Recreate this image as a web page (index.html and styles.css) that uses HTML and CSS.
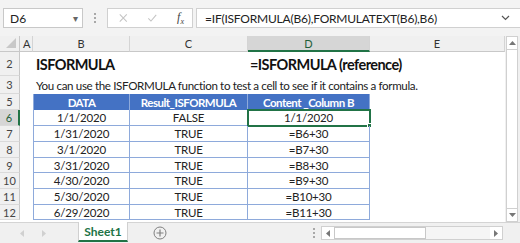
FILE: index.html
```html
<!DOCTYPE html>
<html>
<head>
<meta charset="utf-8">
<link rel="stylesheet" href="styles.css">
</head>
<body>
<div class="app">
  <div class="topbar">
    <div class="namebox"><span class="nb-text">D6</span><span class="nb-arrow">▾</span></div>
    <div class="vdots"><i></i><i></i><i></i></div>
    <div class="fxbox">
      <svg class="ic" width="12" height="12" viewBox="0 0 12 12"><path d="M2 2L10 10M10 2L2 10" stroke="#c4c4c4" stroke-width="1.2" fill="none"/></svg>
      <svg class="ic" width="12" height="12" viewBox="0 0 12 12"><path d="M1.5 6.5L4.5 9.5L10.5 2.5" stroke="#c4c4c4" stroke-width="1.2" fill="none"/></svg>
      <span class="fx">f<sub>x</sub></span>
    </div>
    <div class="formula"><span>=IF(ISFORMULA(B6),FORMULATEXT(B6),B6)</span><span class="chev">
      <svg width="9" height="6" viewBox="0 0 9 6"><path d="M1 1L4.5 4.5L8 1" stroke="#555" stroke-width="1.2" fill="none"/></svg></span></div>
  </div>
  <div class="main">
    <div class="sheet">
      <div class="row hdr">
        <div class="rh corner"><svg width="12" height="12" viewBox="0 0 12 12"><path d="M11 1L11 11L1 11Z" fill="#c8c8c8"/></svg></div>
        <div class="c ca">A</div><div class="c cb">B</div><div class="c cc">C</div><div class="c cd sel">D</div><div class="c ce">E</div>
      </div>
      <div class="row r2">
        <div class="rh">2</div><div class="c ca"></div>
        <div class="c cb title">ISFORMULA</div><div class="c cc"></div>
        <div class="c cd title wide">=ISFORMULA (reference)</div><div class="c ce"></div>
      </div>
      <div class="row r3">
        <div class="rh">3</div><div class="c ca"></div>
        <div class="c cb desc">You can use the ISFORMULA function to test a cell to see if it contains a formula.</div>
      </div>
      <div class="row r5">
        <div class="rh">5</div><div class="c ca"></div>
        <div class="c cb th">DATA</div><div class="c cc th">Result_ISFORMULA</div><div class="c cd th">Content _Column B</div><div class="c ce"></div>
      </div>
      <div class="row h16">
        <div class="rh rsel">6</div><div class="c ca"></div>
        <div class="c cb td">1/1/2020</div><div class="c cc td">FALSE</div><div class="c cd td active">1/1/2020<span class="handle"></span></div><div class="c ce"></div>
      </div>
      <div class="row h16">
        <div class="rh">7</div><div class="c ca"></div>
        <div class="c cb td">1/31/2020</div><div class="c cc td">TRUE</div><div class="c cd td">=B6+30</div><div class="c ce"></div>
      </div>
      <div class="row h16">
        <div class="rh">8</div><div class="c ca"></div>
        <div class="c cb td">3/1/2020</div><div class="c cc td">TRUE</div><div class="c cd td">=B7+30</div><div class="c ce"></div>
      </div>
      <div class="row h15">
        <div class="rh">9</div><div class="c ca"></div>
        <div class="c cb td">3/31/2020</div><div class="c cc td">TRUE</div><div class="c cd td">=B8+30</div><div class="c ce"></div>
      </div>
      <div class="row h16">
        <div class="rh">10</div><div class="c ca"></div>
        <div class="c cb td">4/30/2020</div><div class="c cc td">TRUE</div><div class="c cd td">=B9+30</div><div class="c ce"></div>
      </div>
      <div class="row h16">
        <div class="rh">11</div><div class="c ca"></div>
        <div class="c cb td">5/30/2020</div><div class="c cc td">TRUE</div><div class="c cd td">=B10+30</div><div class="c ce"></div>
      </div>
      <div class="row h15">
        <div class="rh">12</div><div class="c ca"></div>
        <div class="c cb td">6/29/2020</div><div class="c cc td">TRUE</div><div class="c cd td">=B11+30</div><div class="c ce"></div>
      </div>
    </div>
    <div class="vscroll">
      <div class="sbtn"><svg width="7" height="4" viewBox="0 0 7 4"><path d="M0 4L3.5 0L7 4Z" fill="#777"/></svg></div>
      <div class="strack"></div>
      <div class="sbtn"><svg width="7" height="4" viewBox="0 0 7 4"><path d="M0 0L3.5 4L7 0Z" fill="#777"/></svg></div>
    </div>
  </div>
  <div class="tabbar">
    <div class="navs">
      <svg width="4" height="7" viewBox="0 0 4 7"><path d="M4 0L0 3.5L4 7Z" fill="#d0d0d0"/></svg>
      <svg width="4" height="7" viewBox="0 0 4 7"><path d="M0 0L4 3.5L0 7Z" fill="#d0d0d0"/></svg>
    </div>
    <div class="tab">Sheet1</div>
    <div class="plus"><svg width="14" height="14" viewBox="0 0 14 14"><circle cx="7" cy="7" r="6" stroke="#808080" stroke-width="1" fill="none"/><path d="M7 3.5V10.5M3.5 7H10.5" stroke="#808080" stroke-width="1.2"/></svg></div>
    <div class="spacer"></div>
    <div class="vdots small"><i></i><i></i><i></i></div>
    <div class="hscroll">
      <div class="hbtn"><svg width="4" height="7" viewBox="0 0 4 7"><path d="M4 0L0 3.5L4 7Z" fill="#777"/></svg></div>
      <div class="thumb"></div>
      <div class="htrack"></div>
      <div class="hbtn"><svg width="4" height="7" viewBox="0 0 4 7"><path d="M0 0L4 3.5L0 7Z" fill="#777"/></svg></div>
    </div>
  </div>
</div>
</body>
</html>
```

FILE: styles.css
```css
* { box-sizing: border-box; }
html, body { margin: 0; padding: 0; }
body { width: 520px; height: 243px; overflow: hidden; background: #f0f0f0; font-family: "Lato", "Open Sans", sans-serif; color: #222; }
.app { width: 520px; height: 243px; display: flex; flex-direction: column; }

.topbar { height: 36px; display: flex; align-items: flex-start; padding: 8px 0 0 3px; background: #f3f3f3; }
.namebox { width: 80px; height: 20px; background: #fff; border: 1px solid #c8c8c8; display: flex; align-items: center; justify-content: space-between; padding: 0 4px 0 6px; font-size: 12px; }
.nb-arrow { font-size: 10px; color: #666; }
.vdots { width: 24px; height: 20px; display: flex; flex-direction: column; align-items: center; justify-content: center; gap: 2px; }
.vdots i { display: block; width: 2px; height: 2px; background: #a8a8a8; }
.fxbox { width: 86px; height: 20px; background: #fff; border: 1px solid #d0d0d0; display: flex; align-items: center; padding: 0 8px 0 10px; gap: 18px; }
.fx { font-family: "Liberation Serif", serif; font-style: italic; font-size: 12px; color: #444; margin-left: 2px; }
.fx sub { font-size: 8px; }
.formula { flex: 1; height: 20px; margin-left: 3px; background: #fff; border: 1px solid #d0d0d0; border-right: none; display: flex; align-items: center; justify-content: space-between; padding: 0 10px 0 8px; font-size: 12px; letter-spacing: -0.22px; color: #222; }
.chev { display: flex; align-items: center; }

.main { display: flex; height: 186px; }
.sheet { width: 505px; background: #fff; display: flex; flex-direction: column; }
.row { display: flex; height: 16px; position: relative; }
.rh { width: 20px; flex: none; background: #f0f0f0; border-right: 1px solid #c8c8c8; border-bottom: 1px solid #dadada; font-size: 11px; color: #444; display: flex; align-items: center; justify-content: center; }
.c { flex: none; font-size: 11.5px; display: flex; align-items: center; white-space: nowrap; }
.ca { width: 13px; }
.cb { width: 97px; }
.cc { width: 118px; }
.cd { width: 122px; }
.ce { width: 135px; }

.hdr { height: 16px; }
.hdr .rh { justify-content: flex-end; align-items: flex-end; padding: 0 2px 2px 0; border-bottom: 1px solid #c8c8c8; }
.hdr .c { background: #f0f0f0; border-right: 1px solid #d4d4d4; border-bottom: 1px solid #c8c8c8; justify-content: center; font-size: 11px; color: #333; }
.hdr .ca { justify-content: flex-start; padding-left: 3px; }
.hdr .c.sel { background: #d6d6d6; border-bottom: 2px solid #217346; color: #1f5f3a; }

.r2 { height: 24px; }
.title { font-weight: bold; font-size: 14.5px; letter-spacing: -0.55px; color: #111; padding-left: 3px; overflow: visible; }
.wide { overflow: visible; padding-left: 2px; }
.r3 { height: 18px; }
.desc { font-size: 11.6px; letter-spacing: -0.36px; overflow: visible; padding-left: 3px; color: #222; }
.r5 { height: 16px; }
.th { background: #4472c4; color: #fff; font-weight: bold; justify-content: center; border-right: 1px solid #8eaadb; letter-spacing: -0.5px; }
.h16 { height: 16px; }
.h15 { height: 15px; }
.td { justify-content: center; border-right: 1px solid #8eaadb; border-bottom: 1px solid #8eaadb; color: #222; letter-spacing: -0.2px; }
.cb.td, .cb.th { border-left: 1px solid #8eaadb; }
.rsel { background: #d6d6d6; border-right: 2px solid #217346; color: #1f5f3a; }
.active { position: relative; outline: 2px solid #217346; outline-offset: -1px; }
.handle { position: absolute; right: -3px; bottom: -3px; width: 5px; height: 5px; background: #217346; border: 1px solid #fff; }

.vscroll { width: 15px; background: #f0f0f0; display: flex; flex-direction: column; padding: 0 2px 0 1px; }
.sbtn { height: 14px; background: #fff; border: 1px solid #d0d0d0; display: flex; align-items: center; justify-content: center; }
.strack { flex: 1; background: #fff; border-left: 1px solid #d0d0d0; border-right: 1px solid #d0d0d0; }

.tabbar { height: 21px; display: flex; align-items: flex-start; background: #f0f0f0; border-top: 1px solid #d4d4d4; }
.navs { width: 78px; height: 20px; display: flex; align-items: center; gap: 18px; padding-left: 20px; }
.tab { width: 50px; height: 20px; background: #fff; border-bottom: 2px solid #217346; border-left: 1px solid #d0d0d0; border-right: 1px solid #d0d0d0; margin-top: -1px; color: #217346; font-weight: bold; font-size: 12px; display: flex; align-items: center; justify-content: center; }
.plus { width: 64px; height: 20px; display: flex; align-items: center; justify-content: center; }
.spacer { flex: 1; }
.vdots.small { width: 14px; }
.hscroll { width: 182px; height: 14px; margin: 3px 17px 0 0; display: flex; background: #fff; border: 1px solid #d0d0d0; }
.hbtn { width: 12px; display: flex; align-items: center; justify-content: center; }
.thumb { width: 92px; border: 1px solid #c8c8c8; background: #fff; }
.htrack { flex: 1; background: #f5f5f5; }
```
